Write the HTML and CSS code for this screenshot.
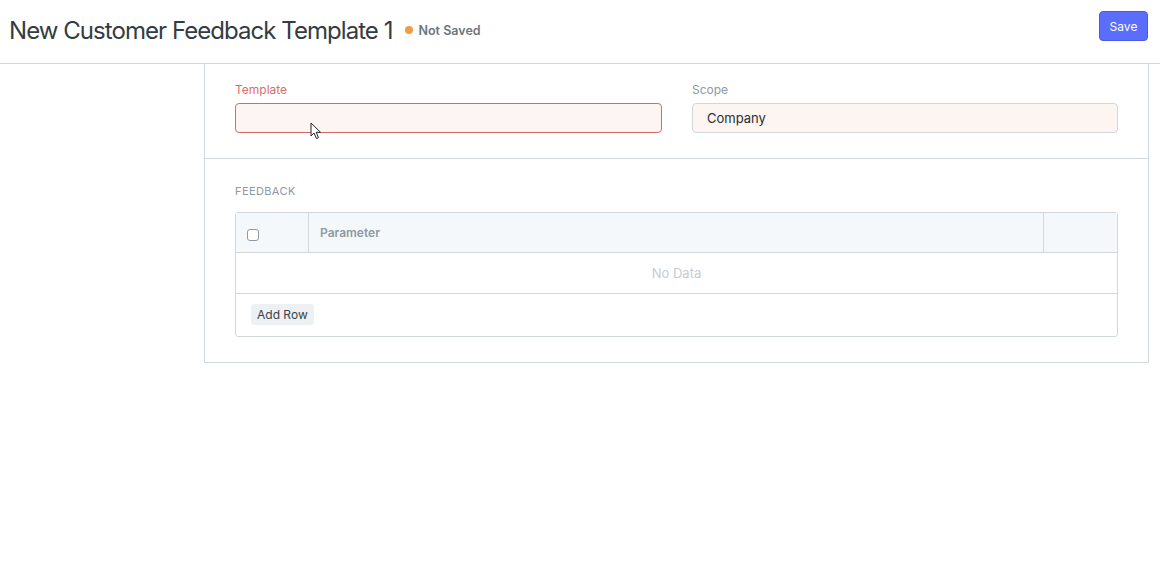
FILE: index.html
```html
<!DOCTYPE html>
<html lang="en">
<head>
<meta charset="utf-8">
<title>New Customer Feedback Template 1</title>
<link rel="stylesheet" href="styles.css">
</head>
<body>
<header class="page-head">
  <div class="title-wrap">
    <h1 class="title">New Customer Feedback Template 1</h1>
    <span class="indicator"><span class="dot"></span>Not Saved</span>
  </div>
  <button class="btn-save">Save</button>
</header>
<div class="layout">
  <aside class="sidebar"></aside>
  <main class="form-card">
    <section class="form-section first">
      <div class="field">
        <label class="field-label error">Template</label>
        <div class="input error-input"></div>
        <svg class="cursor" width="12" height="18" viewBox="0 0 12 18" aria-hidden="true">
          <path d="M1 1 L1 14 L4 11 L6.5 16.5 L8.5 15.6 L6.2 10.3 L10.5 10.3 Z" fill="#fff" stroke="#222" stroke-width="1" stroke-linejoin="round"/>
        </svg>
      </div>
      <div class="field">
        <label class="field-label">Scope</label>
        <div class="input filled">Company</div>
      </div>
    </section>
    <section class="form-section second">
      <div class="section-title">FEEDBACK</div>
      <div class="grid">
        <div class="grid-head">
          <div class="col-check"><span class="checkbox"></span></div>
          <div class="col-param">Parameter</div>
          <div class="col-last"></div>
        </div>
        <div class="grid-empty">No Data</div>
        <div class="grid-foot"><button class="btn-add">Add Row</button></div>
      </div>
    </section>
  </main>
</div>
</body>
</html>
```
FILE: styles.css
```css
* { box-sizing: border-box; }
html, body { margin: 0; padding: 0; background: #fff; }
body {
  font-family: Inter, "Noto Sans", "Liberation Sans", sans-serif;
  color: #36414c;
  width: 1160px;
  height: 580px;
  overflow: hidden;
}
.page-head {
  height: 64px;
  border-bottom: 1px solid #d1d8dd;
  display: flex;
  align-items: center;
  justify-content: space-between;
  padding: 0 12px 0 9px;
}
.title-wrap { display: flex; align-items: center; gap: 12px; margin-top: -3px; }
.title {
  margin: 0;
  font-size: 24px;
  font-weight: 400;
  color: #333c44;
  letter-spacing: -0.95px;
}
.indicator {
  display: flex;
  align-items: center;
  gap: 6px;
  font-size: 12.5px;
  font-weight: 600;
  color: #6c7680;
}
.dot { width: 8px; height: 8px; border-radius: 50%; background: #f39c41; }
.btn-save {
  font-family: inherit;
  width: 49px;
  height: 30px;
  margin-top: -11px;
  border: 1px solid #4a5ae6;
  border-radius: 4px;
  background: #5b6dfc;
  color: #fff;
  font-size: 12px;
  padding: 0;
}
.layout { display: flex; }
.sidebar { width: 204px; flex: none; }
.form-card {
  width: 945px;
  border: 1px solid #d1d8dd;
  border-top: none;
}
.form-section { padding: 17px 30px 25px; }
.form-section.first {
  display: grid;
  grid-template-columns: 427px 426px;
  gap: 30px;
  border-bottom: 1px solid #d1d8dd;
}
.field { position: relative; }
.field-label {
  display: block;
  font-size: 12px;
  line-height: 17px;
  color: #8d99a6;
  margin-bottom: 5px;
}
.field-label.error { color: #d9534f; opacity: 0.85; }
.input {
  height: 30px;
  border: 1px solid #d1d8dd;
  border-radius: 4px;
  font-size: 13px;
  line-height: 28px;
  padding: 0 14px;
  color: #36414c;
}
.error-input { border-color: #d36b68; background: #fdf5f3; }
.filled { background: #fcf5f1; color: #2a2f33; }
.cursor { position: absolute; left: 75px; top: 41px; }
.form-section.second { padding: 24px 30px 25px; }
.section-title {
  font-size: 11px;
  line-height: 16px;
  letter-spacing: 0.4px;
  color: #8d99a6;
  margin-bottom: 13px;
}
.grid {
  border: 1px solid #d1d8dd;
  border-radius: 3px;
}
.grid-head {
  display: flex;
  height: 40px;
  background: #f4f8fa;
  border-bottom: 1px solid #d1d8dd;
}
.col-check {
  width: 73px;
  border-right: 1px solid #d1d8dd;
  display: flex;
  align-items: center;
  padding: 5px 0 0 11px;
}
.checkbox {
  width: 12px;
  height: 12px;
  border: 1px solid #8d99a6;
  border-radius: 3px;
  background: #fff;
}
.col-param {
  flex: 1;
  border-right: 1px solid #d1d8dd;
  display: flex;
  align-items: center;
  padding-left: 11px;
  font-size: 12px;
  font-weight: 600;
  color: #8d99a6;
}
.col-last { width: 73px; }
.grid-empty {
  height: 41px;
  border-bottom: 1px solid #d1d8dd;
  display: flex;
  align-items: center;
  justify-content: center;
  font-size: 13px;
  color: #c5ccd3;
}
.grid-foot { height: 42px; display: flex; align-items: center; padding-left: 15px; padding-bottom: 2px; }
.btn-add {
  font-family: inherit;
  border: none;
  border-radius: 3px;
  background: #eef1f4;
  color: #36414c;
  font-size: 12px;
  height: 21px;
  padding: 0 6px;
}
```
